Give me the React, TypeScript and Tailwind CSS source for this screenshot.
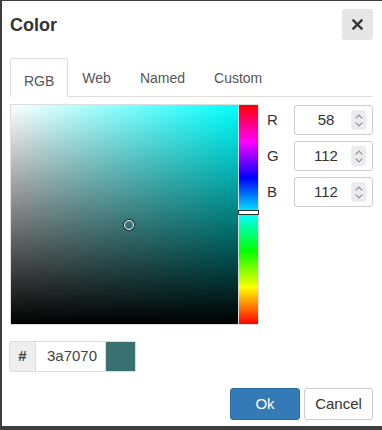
import React from "react";

function Spinner() {
  return (
    <div className="w-[15px] h-[20px] bg-[#ececf0] rounded-[3px] flex flex-col items-center justify-center gap-[3px]">
      <svg width="8" height="5" viewBox="0 0 8 5" fill="none">
        <path d="M1 4.2L4 1.2L7 4.2" stroke="#8a8a8e" strokeWidth="1.1" strokeLinecap="round" strokeLinejoin="round" />
      </svg>
      <svg width="8" height="5" viewBox="0 0 8 5" fill="none">
        <path d="M1 0.8L4 3.8L7 0.8" stroke="#8a8a8e" strokeWidth="1.1" strokeLinecap="round" strokeLinejoin="round" />
      </svg>
    </div>
  );
}

function NumRow({ label, value }: { label: string; value: string }) {
  return (
    <div className="flex items-center h-[30px]">
      <div className="w-[27px] text-[15px] text-[#333]">{label}</div>
      <div className="flex-1 h-[30px] border border-[#ccc] rounded-[3px] bg-white flex items-center">
        <div className="flex-1 text-center text-[15px] text-[#333] pl-[6px]">{value}</div>
        <div className="pr-[6px]">
          <Spinner />
        </div>
      </div>
    </div>
  );
}

export default function App() {
  return (
    <div
      className="w-[382px] h-[430px] bg-[#3d3d3d] pl-[2px] pt-[1px] pb-[4px] overflow-hidden"
      style={{ fontFamily: '"Liberation Sans", Arial, sans-serif' }}
    >
      <div className="w-full h-full bg-white flex flex-col pl-[8px] pr-[9px]">
        {/* Header */}
        <div className="flex items-center justify-between pt-[8px]">
          <div className="text-[18px] font-bold text-[#333] leading-none">Color</div>
          <div className="w-[31px] h-[31px] bg-[#e6e6e6] rounded-[3px] flex items-center justify-center">
            <svg width="11" height="11" viewBox="0 0 11 11">
              <path d="M1.5 1.5L9.5 9.5M9.5 1.5L1.5 9.5" stroke="#333" strokeWidth="2.4" strokeLinecap="square" />
            </svg>
          </div>
        </div>

        {/* Tabs */}
        <div className="flex mt-[18px] h-[39px] border-b border-[#ddd]">
          <div className="h-[39px] px-[13px] border border-[#ddd] border-b-white bg-white rounded-t-[3px] text-[14px] text-[#555] flex items-center pt-[8px] -mb-[1px]">
            RGB
          </div>
          <div className="h-[38px] px-[14px] text-[14px] text-[#555] flex items-center pt-[3px]">Web</div>
          <div className="h-[38px] px-[15px] text-[14px] text-[#555] flex items-center pt-[3px]">Named</div>
          <div className="h-[38px] px-[14px] text-[14px] text-[#555] flex items-center pt-[3px]">Custom</div>
        </div>

        {/* Body */}
        <div className="flex mt-[7px]">
          <div className="relative w-[229px] h-[221px] border border-[#ddd]">
            <div
              className="absolute inset-0"
              style={{ background: "linear-gradient(to right, #ffffff, #00ffff)" }}
            />
            <div
              className="absolute inset-0"
              style={{ background: "linear-gradient(to bottom, rgba(0,0,0,0), #000000)" }}
            />
            <div className="absolute left-[113px] top-[115px] w-[10px] h-[10px] rounded-full border-[1.5px] border-white shadow-[0_0_0_1px_#222]" />
          </div>
          <div
            className="relative w-[20px] h-[221px] border-y border-r border-[#ddd]"
            style={{
              background:
                "linear-gradient(to bottom, #ff0000 0%, #ff00ff 16.67%, #0000ff 33.33%, #00ffff 50%, #00ff00 66.67%, #ffff00 83.33%, #ff0000 100%)",
            }}
          >
            <div className="absolute left-[-1px] right-[-1px] top-[105px] h-[5px] bg-white border border-[#333]" />
          </div>
          <div className="flex-1 flex flex-col gap-[6px] pl-[8px] pt-[1px]">
            <NumRow label="R" value="58" />
            <NumRow label="G" value="112" />
            <NumRow label="B" value="112" />
          </div>
        </div>

        {/* Hex row */}
        <div className="flex mt-[16px] h-[31px] -ml-[1px]">
          <div className="w-[27px] h-full bg-[#eee] border border-[#ddd] flex items-center justify-center text-[15px] font-bold text-[#444] rounded-l-[3px]">
            #
          </div>
          <div className="w-[69px] h-full border-y border-[#ddd] flex items-center pl-[11px] text-[15px] text-[#444]">
            3a7070
          </div>
          <div className="w-[31px] h-full bg-[#3a7070] border border-[#ddd]" />
        </div>

        {/* Footer */}
        <div className="flex justify-end gap-[4px] mt-[16px]">
          <div className="w-[70px] h-[32px] bg-[#337ab7] border border-[#2e6da4] rounded-[3px] flex items-center justify-center text-[15px] text-white">
            Ok
          </div>
          <div className="w-[69px] h-[32px] bg-white border border-[#ccc] rounded-[3px] flex items-center justify-center text-[15px] text-[#333]">
            Cancel
          </div>
        </div>
      </div>
    </div>
  );
}
